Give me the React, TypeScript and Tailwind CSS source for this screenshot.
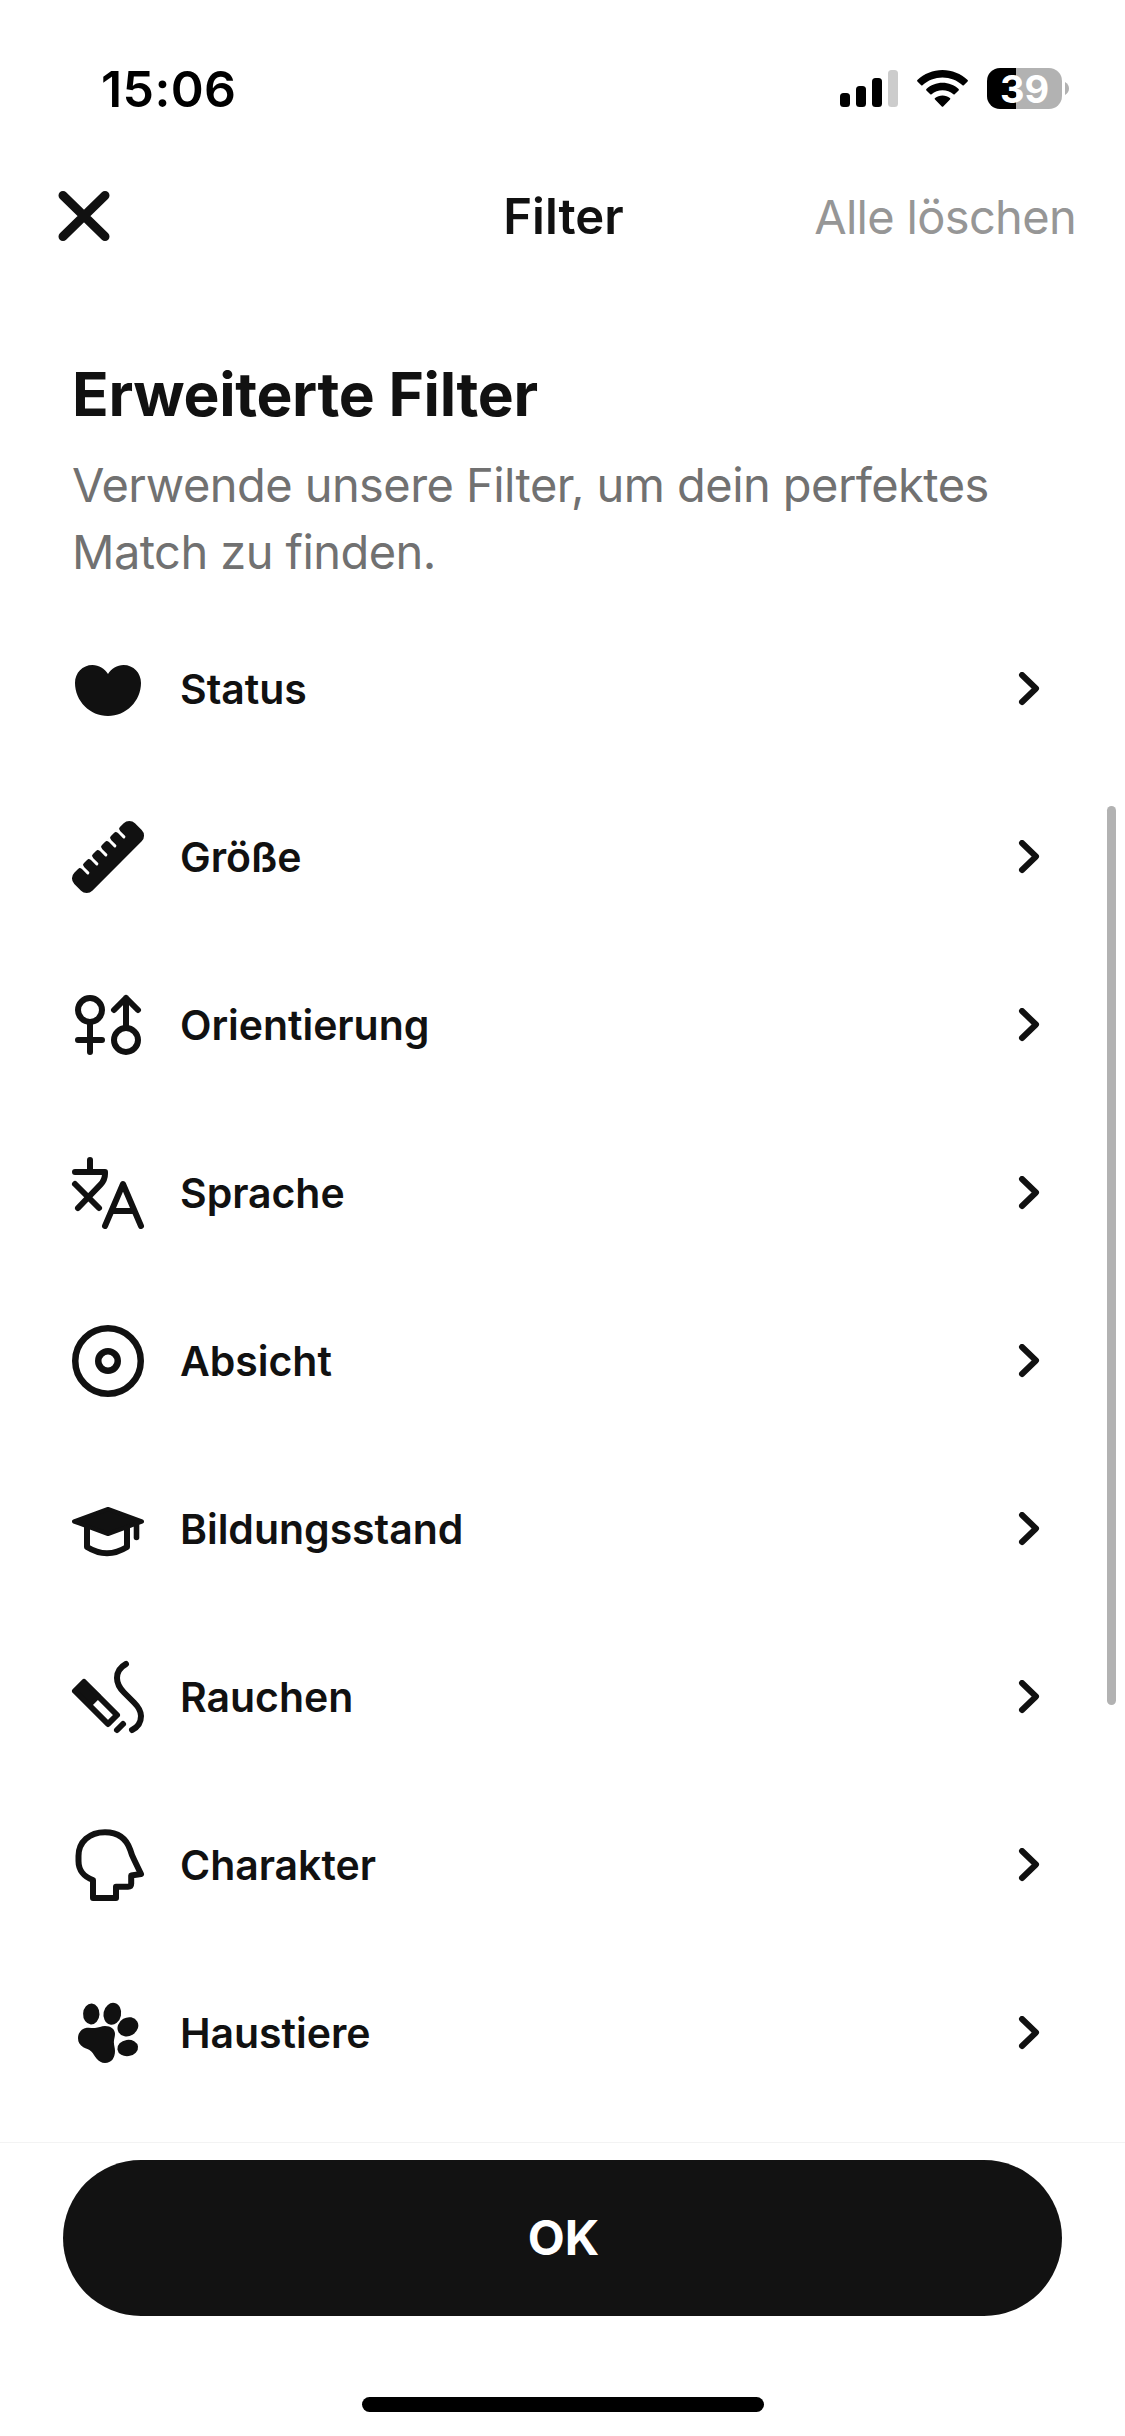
import type { ReactNode } from "react";

interface FilterItem {
  id: string;
  label: string;
  icon: ReactNode;
}

const stroke = {
  fill: "none",
  stroke: "currentColor",
  strokeWidth: 6,
  strokeLinecap: "round",
  strokeLinejoin: "round",
} as const;

const HeartIcon = () => (
  <path
    fill="currentColor"
    d="M36 21C32.5 15.5 27 12 20.5 12C10.5 12 3 19.8 3 30C3 48 18 63 36 63C54 63 69 48 69 30C69 19.8 61.5 12 51.5 12C45 12 39.5 15.5 36 21Z"
  />
);

const RulerIcon = () => (
  <g transform="translate(36 36) rotate(-45)">
    <rect x="-42.9" y="-12.75" width="85.8" height="25.5" rx="8" fill="currentColor" />
    {[-25.5, -12.75, 0, 12.75, 25.5].map((x) => (
      <path
        key={x}
        transform={`translate(${x} 0)`}
        fill="#fff"
        d="M-4 -13.2Q-1.5 -12.5 -1.5 -9.5V-3A1.5 1.5 0 0 0 1.5 -3V-9.5Q1.5 -12.5 4 -13.2Z"
      />
    ))}
  </g>
);

const OrientationIcon = () => (
  <g {...stroke}>
    <circle cx="18" cy="21" r="12" />
    <path d="M18 33V63M6 51H30" />
    <circle cx="54" cy="51" r="12" />
    <path d="M54 39V9M42 21L54 9L66 21" />
  </g>
);

const LanguageIcon = () => (
  <g {...stroke}>
    <path d="M18 3V15" />
    <path d="M3 15H33V17C33 21 31.2 24.8 28.5 27.6L6 51" />
    <path d="M3 27L27 51" />
    <path d="M33 69L51 27L69 69M40 54H62" />
  </g>
);

const IntentIcon = () => (
  <g {...stroke} strokeWidth={6.5}>
    <circle cx="36" cy="36" r="32.75" />
    <circle cx="36" cy="36" r="9.75" />
  </g>
);

const EducationIcon = () => (
  <g {...stroke}>
    <path d="M2 28.5L36 41L70 28.5L36 16Z" fill="currentColor" strokeWidth={4} />
    <path d="M15 34V54Q35 66.5 55 54V34" strokeLinecap="butt" />
    <path d="M64.5 30V44.5" strokeWidth={5.6} />
  </g>
);

const SmokingIcon = () => (
  <g {...stroke}>
    <path d="M12 21L3 30L36 63L45 54Z" />
    <path d="M12 21L3 30L18 44L27 35Z" fill="currentColor" strokeWidth={4} />
    <path d="M45 69L51 63" />
    <path d="M54 3C48.5 6 45 11 45 17C45 23 48 27.5 52 31.5L62 41.5C66.5 46 69 49.5 69 55C69 61 66 66 60 69" />
  </g>
);

const CharacterIcon = () => (
  <path
    {...stroke}
    d="M21 51C12 48 6.5 41 6.5 32V27C6.5 13 17.5 3.2 33 3.2C45.5 3.2 54.5 9.5 58.3 21C59.3 25 61 28.5 62.5 31.5L69 45L59.2 46.5V54.5Q59.2 57.7 56 57.7H44V69H21Z"
  />
);

const PetsIcon = () => (
  <g fill="currentColor">
    <ellipse cx="19.3" cy="17" rx="8.2" ry="10.4" transform="rotate(3 19.3 17)" />
    <ellipse cx="40.3" cy="16.8" rx="8.8" ry="11" transform="rotate(12 40.3 16.8)" />
    <ellipse cx="55.9" cy="29.8" rx="10.8" ry="9.2" transform="rotate(-30 55.9 29.8)" />
    <ellipse cx="55.7" cy="51" rx="10.4" ry="8.2" transform="rotate(-8 55.7 51)" />
    <path d="M14.7 30.8C18 30.3 20 31.2 23 31C26.5 30.8 29.5 29 33 29C38.8 29 43 32 43 37C43 40 41.7 42.5 41.9 45.7C42 48.5 43 50.5 43 54C43 61 39.5 66 33 66C29.5 66 27 64.3 24.7 61.7C22 58.5 21.5 56.7 19.3 54.5C17 52.3 14 51.8 11.3 50.3C8 48.3 6 45.5 6 41.3C6 35.7 9.5 31.7 14.7 30.8Z" />
  </g>
);

const filters: FilterItem[] = [
  { id: "status", label: "Status", icon: <HeartIcon /> },
  { id: "height", label: "Größe", icon: <RulerIcon /> },
  { id: "orientation", label: "Orientierung", icon: <OrientationIcon /> },
  { id: "language", label: "Sprache", icon: <LanguageIcon /> },
  { id: "intent", label: "Absicht", icon: <IntentIcon /> },
  { id: "education", label: "Bildungsstand", icon: <EducationIcon /> },
  { id: "smoking", label: "Rauchen", icon: <SmokingIcon /> },
  { id: "character", label: "Charakter", icon: <CharacterIcon /> },
  { id: "pets", label: "Haustiere", icon: <PetsIcon /> },
];

function StatusBar() {
  return (
    <div className="flex h-[177px] shrink-0 items-center justify-between pr-14 pl-[101px] text-black">
      <span className="pt-[2px] text-[50px] font-semibold tracking-[0.4px]">15:06</span>
      <div className="flex items-center">
        {/* Signal */}
        <svg width="58" height="37" viewBox="0 0 58 37">
          <rect x="0" y="23" width="10" height="14" rx="3.5" />
          <rect x="16" y="16" width="10" height="21" rx="3.5" />
          <rect x="32" y="8" width="10" height="29" rx="3.5" />
          <rect x="48" y="0" width="10" height="37" rx="3.5" fill="#ccc" />
        </svg>
        {/* Wifi */}
        <svg width="51" height="37" viewBox="0 0 51 37" className="ml-[19px]">
          <path d="M25.5 0C35 0 44 3.7 50.6 10.1Q51.2 10.8 50.6 11.5L46.8 15.3Q46.2 15.9 45.5 15.3C40 10.4 33 7.6 25.5 7.6C18 7.6 11 10.4 5.5 15.3Q4.8 15.9 4.2 15.3L0.4 11.5Q-0.2 10.8 0.4 10.1C7 3.7 16 0 25.5 0Z" />
          <path d="M25.5 12.8C31.6 12.8 37.3 15.1 41.6 19Q42.3 19.7 41.6 20.4L37.7 24.3Q37.1 24.8 36.4 24.3C33.4 21.8 29.6 20.3 25.5 20.3C21.4 20.3 17.6 21.8 14.6 24.3Q13.9 24.8 13.3 24.3L9.4 20.4Q8.7 19.7 9.4 19C13.7 15.1 19.4 12.8 25.5 12.8Z" />
          <path d="M25.5 25.5C28.3 25.5 30.9 26.5 32.9 28.1Q33.7 28.8 33 29.5L26.2 36.5Q25.5 37.2 24.8 36.5L18 29.5Q17.3 28.8 18.1 28.1C20.1 26.5 22.7 25.5 25.5 25.5Z" />
        </svg>
        {/* Battery */}
        <div className="ml-[19px] flex h-[41px] w-[75px] items-center justify-center rounded-[13px] bg-[linear-gradient(to_right,#000_29px,#b2b2b2_29px)]">
          <span className="text-[38px] leading-none font-bold text-white">39</span>
        </div>
        <svg width="4" height="13" viewBox="0 0 4 13" className="ml-[3px]">
          <path d="M0 0C2.5 1.3 4 3.7 4 6.5C4 9.3 2.5 11.7 0 13Z" fill="#b2b2b2" />
        </svg>
      </div>
    </div>
  );
}

function Header() {
  return (
    <header className="grid h-[78px] shrink-0 grid-cols-[1fr_auto_1fr] items-center px-[49px]">
      <button aria-label="Schließen" className="ml-[9px] w-[52px]">
        <svg width="52" height="51" viewBox="0 0 52 51" {...stroke} strokeWidth={9}>
          <path d="M5 4.5L47 45.5M47 4.5L5 45.5" />
        </svg>
      </button>
      <h1 className="pt-px pl-[2px] text-[49px] font-semibold">Filter</h1>
      <button className="justify-self-end pt-[2px] text-[47px] tracking-[-0.68px] whitespace-nowrap text-[#969696]">
        Alle löschen
      </button>
    </header>
  );
}

function FilterRow({ label, icon }: FilterItem) {
  return (
    <li className="flex h-[168px] items-center">
      <svg width="72" height="72" viewBox="0 0 72 72" className="shrink-0 overflow-visible">
        {icon}
      </svg>
      <span className="ml-9 flex-1 pt-[2px] text-[41px] font-semibold tracking-[-0.04px]">{label}</span>
      <svg width="22" height="34" viewBox="0 0 22 34" {...stroke}>
        <path d="M4 3L18 16.5L4 30" />
      </svg>
    </li>
  );
}

export default function App() {
  return (
    <div className="flex h-[2436px] w-[1125px] flex-col overflow-hidden bg-white font-['Inter',sans-serif] text-[#111]">
      <StatusBar />
      <Header />

      <main className="relative flex-1 pt-[103px] pr-[85px] pl-[72px]">
        <h2 className="text-[60.5px] leading-[72px] font-bold tracking-[-0.35px]">Erweiterte Filter</h2>
        <p className="mt-[21px] text-[47px] leading-[67px] tracking-[-0.56px] text-[#717171]">
          Verwende unsere Filter, um dein perfektes
          <br />
          Match zu finden.
        </p>
        <ul className="mt-5">
          {filters.map((item) => (
            <FilterRow key={item.id} {...item} />
          ))}
        </ul>
        {/* Scroll indicator */}
        <div className="absolute top-[551px] right-[9px] h-[899px] w-[9px] rounded-full bg-[#b2b2b2]" />
      </main>

      <footer className="flex h-[294px] shrink-0 flex-col items-center border-t border-[#f3f3f3] pt-[17px]">
        <button className="h-[156px] w-[999px] rounded-full bg-[#121212] pl-[2px] text-[48px] font-bold text-white">
          OK
        </button>
        <div className="mt-[81px] h-[15px] w-[402px] rounded-full bg-black" />
      </footer>
    </div>
  );
}
